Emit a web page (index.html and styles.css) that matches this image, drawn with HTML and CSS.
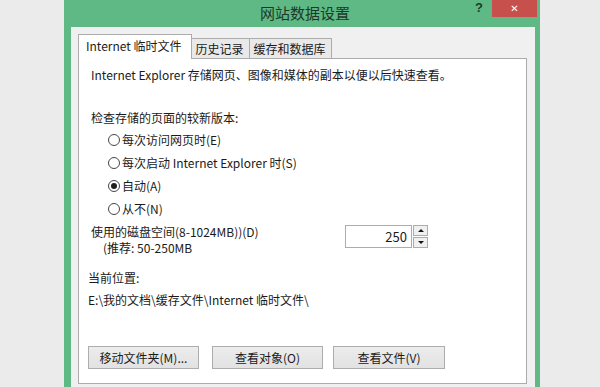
FILE: index.html
```html
<!DOCTYPE html>
<html>
    <head>
        <meta charset="utf-8">
        <meta name="viewport" content="width=device-width, initial-scale=1.0">
        <title>网站数据设置</title>

        <link rel="stylesheet" href="styles.css">
    </head>
    <body>
        <div class="window">
            <div class="titlebar">
                <span></span>
                <span class="title">网站数据设置</span>
                <div class="controls">
                    <span class="help">?</span>
                    <span class="close">&#x2715;</span>
                </div>
            </div>
            <div class="dialog">
                <div class="tabs">
                    <div class="tab active">Internet 临时文件</div>
                    <div class="tab">历史记录</div>
                    <div class="tab">缓存和数据库</div>
                </div>
                <div class="panel">
                    <p class="intro">Internet Explorer 存储网页、图像和媒体的副本以便以后快速查看。</p>
                    <p class="heading">检查存储的页面的较新版本:</p>
                    <div class="radios">
                        <div class="radio"><span class="dot"></span>每次访问网页时(E)</div>
                        <div class="radio"><span class="dot"></span>每次启动 Internet Explorer 时(S)</div>
                        <div class="radio"><span class="dot checked"></span>自动(A)</div>
                        <div class="radio"><span class="dot"></span>从不(N)</div>
                    </div>
                    <div class="disk">
                        <div class="disk--text">
                            <p>使用的磁盘空间(8-1024MB))(D)</p>
                            <p class="indent">(推荐: 50-250MB</p>
                        </div>
                        <div class="spin">
                            <div class="spin--value">250</div>
                            <div class="spin--buttons">
                                <span class="arrow up"></span>
                                <span class="arrow down"></span>
                            </div>
                        </div>
                    </div>
                    <p class="location">当前位置:</p>
                    <p class="path">E:\我的文档\缓存文件\Internet 临时文件\</p>
                    <div class="buttons">
                        <button type="button" class="btn">移动文件夹(M)...</button>
                        <button type="button" class="btn">查看对象(O)</button>
                        <button type="button" class="btn wide">查看文件(V)</button>
                    </div>
                </div>
            </div>
        </div>
    </body>
</html>
```

FILE: styles.css
```css
:root {
    --green: rgb(94, 185, 133);
    --face: rgb(240, 240, 240);
    --line: rgb(172, 172, 172);
    --text: rgb(26, 26, 26);
}

body {
    background-color: rgb(235, 235, 235);
    color: var(--text);
    font-family: "Segoe UI", "Noto Sans CJK SC", sans-serif;
    font-size: 12px;
    margin: 0;
    height: 387px;
    overflow: hidden;
}

p {
    margin: 0;
    line-height: 16px;
    white-space: nowrap;
}

.window {
    margin-left: 64px;
    width: 476px;
    height: 400px;
    background-color: var(--green);
    padding: 0 5px 0 7px;
    box-sizing: border-box;
}

.titlebar {
    height: 27px;
    display: grid;
    grid-template-columns: 1fr auto 1fr;
    margin: 0 -5px 0 -7px;
}

.title {
    font-size: 15px;
    line-height: 26px;
    color: rgb(30, 56, 40);
    padding-left: 6px;
}

.controls {
    justify-self: end;
    display: flex;
    align-items: flex-start;
    padding-right: 3px;
}

.help {
    font-family: "Liberation Sans", sans-serif;
    font-weight: bold;
    font-size: 13px;
    line-height: 16px;
    color: rgb(28, 60, 40);
    margin-right: 9px;
}

.close {
    width: 45px;
    height: 17px;
    background-color: rgb(199, 80, 76);
    color: white;
    font-family: "DejaVu Sans", sans-serif;
    font-size: 10px;
    line-height: 17px;
    text-align: center;
}

.dialog {
    background-color: var(--face);
    height: 373px;
    padding: 7px 8px 0 7px;
    box-sizing: border-box;
}

.tabs {
    display: flex;
    align-items: flex-end;
    height: 24px;
}

.tab {
    height: 20px;
    line-height: 19px;
    padding: 0 5px 0 4px;
    border: 1px solid var(--line);
    border-bottom: none;
    border-left: none;
    background-color: rgb(233, 233, 233);
    box-sizing: border-box;
}

.tab.active {
    height: 25px;
    line-height: 22px;
    padding: 0 9px 0 7px;
    border-left: 1px solid var(--line);
    background-color: white;
    margin-bottom: -1px;
    z-index: 1;
}

.panel {
    background-color: white;
    border: 1px solid var(--line);
    height: 326px;
    padding: 8px 12px 0 12px;
    box-sizing: border-box;
}

.heading {
    margin-top: 27px;
}

.radios {
    margin: 2px 0 0 17px;
}

.radio {
    height: 23px;
    display: flex;
    align-items: center;
}

.dot {
    width: 12px;
    height: 12px;
    border: 1px solid rgb(70, 70, 70);
    border-radius: 50%;
    margin-right: 2px;
    box-sizing: border-box;
    display: flex;
    align-items: center;
    justify-content: center;
}

.dot.checked::after {
    content: "";
    width: 6px;
    height: 6px;
    border-radius: 50%;
    background-color: rgb(30, 30, 30);
}

.disk {
    display: flex;
    margin-top: 4px;
}

.disk--text {
    width: 254px;
}

.indent {
    padding-left: 12px;
}

.spin {
    display: flex;
    margin-top: 1px;
}

.spin--value {
    width: 67px;
    height: 23px;
    border: 1px solid var(--line);
    box-sizing: border-box;
    text-align: right;
    padding-right: 4px;
    font-size: 13px;
    line-height: 21px;
}

.spin--buttons {
    display: flex;
    flex-direction: column;
    gap: 1px;
    margin-left: 1px;
}

.arrow {
    width: 15px;
    height: 11px;
    border: 1px solid var(--line);
    background-color: rgb(240, 240, 240);
    box-sizing: border-box;
    display: flex;
    align-items: center;
    justify-content: center;
}

.arrow::after {
    content: "";
    border-left: 3px solid transparent;
    border-right: 3px solid transparent;
}

.arrow.up::after {
    border-bottom: 3px solid rgb(20, 20, 20);
}

.arrow.down::after {
    border-top: 3px solid rgb(20, 20, 20);
}

.location {
    margin: 14px 0 0 -3px;
}

.path {
    margin: 6px 0 0 -3px;
}

.buttons {
    display: flex;
    margin: 38px 0 0 -3px;
}

.btn {
    width: 111px;
    height: 23px;
    margin-right: 13px;
    font-family: "Segoe UI", "Noto Sans CJK SC", sans-serif;
    font-size: 12px;
    color: var(--text);
    background: linear-gradient(rgb(236, 236, 236), rgb(226, 226, 226));
    border: 1px solid rgb(173, 173, 173);
    padding: 0;
}

.btn.wide {
    width: 112px;
    margin-right: 0;
    margin-left: -3px;
}
```
